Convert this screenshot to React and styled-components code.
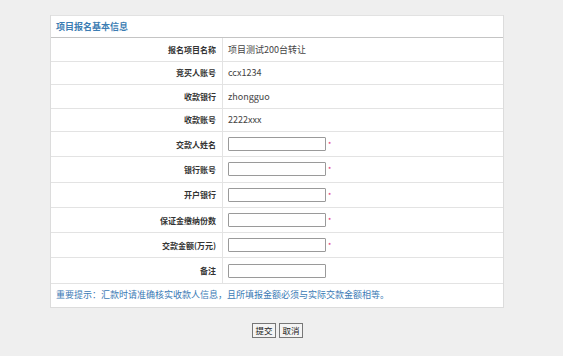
import React from "react";
import styled, { createGlobalStyle } from "styled-components";

const GlobalStyle = createGlobalStyle`
  html, body {
    margin: 0;
    padding: 0;
    background: #efefef;
    font-family: "Noto Sans CJK SC", "Noto Sans", sans-serif;
  }
`;

const Page = styled.div`
  width: 563px;
  height: 356px;
  padding-top: 15px;
  box-sizing: border-box;
  background: #efefef;
`;

const Panel = styled.div`
  margin-left: 50px;
  width: 454px;
  background: #fff;
  border: 1px solid #dcdcdc;
  border-top: 0;
  box-sizing: border-box;
`;

const Title = styled.div`
  height: 23px;
  box-sizing: border-box;
  line-height: 22px;
  padding-left: 5px;
  font-size: 9px;
  font-weight: bold;
  color: #3c7db3;
  border-top: 1px solid #e2e2e2;
  border-bottom: 1px solid #c4c4c4;
`;

const Row = styled.div`
  display: grid;
  grid-template-columns: 172px 1fr;
  height: ${(p) => p.$h}px;
  box-sizing: border-box;
  border-bottom: 1px solid #e3e3e3;
`;

const Label = styled.div`
  display: flex;
  align-items: center;
  justify-content: flex-end;
  padding-right: 6px;
  border-right: 1px solid #e3e3e3;
  font-size: 8px;
  font-weight: bold;
  color: #333;
`;

const Value = styled.div`
  display: flex;
  align-items: center;
  padding-left: 5px;
  font-size: 9px;
  color: #444;
`;

const Input = styled.input`
  width: 98px;
  height: 14px;
  box-sizing: border-box;
  border: 1px solid #9a9a9a;
  border-radius: 1px;
  margin: 0;
  padding: 0 2px;
  font-size: 8px;
  background: #fff;
`;

const Star = styled.span`
  color: #e0206a;
  font-size: 7px;
  margin-left: 2px;
`;

const Tip = styled.div`
  height: 23px;
  box-sizing: border-box;
  line-height: 22px;
  padding-left: 5px;
  font-size: 9px;
  color: #3a7ab5;
`;

const Actions = styled.div`
  display: flex;
  justify-content: center;
  gap: 3px;
  margin-top: 15px;
  padding-right: 8px;
`;

const Button = styled.button`
  width: 24px;
  height: 15px;
  padding: 0;
  margin: 0;
  font-family: "Noto Sans CJK SC", sans-serif;
  font-size: 8.5px;
  line-height: 12px;
  color: #222;
  background: #f4f4f4;
  border: 1px solid #777;
  border-radius: 0;
`;

const info = [
  ["报名项目名称", "项目测试200台转让"],
  ["竞买人账号", "ccx1234"],
  ["收款银行", "zhongguo"],
  ["收款账号", "2222xxx"],
];

const fields = [
  ["交款人姓名", true],
  ["银行账号", true],
  ["开户银行", true],
  ["保证金缴纳份数", true],
  ["交款金额(万元)", true],
  ["备注", false],
];

export default function App() {
  return (
    <Page>
      <GlobalStyle />
      <Panel>
        <Title>项目报名基本信息</Title>
        {info.map(([label, value]) => (
          <Row key={label} $h={23.5}>
            <Label>{label}</Label>
            <Value>{value}</Value>
          </Row>
        ))}
        {fields.map(([label, required]) => (
          <Row key={label} $h={25.3}>
            <Label>{label}</Label>
            <Value>
              <Input type="text" />
              {required && <Star>*</Star>}
            </Value>
          </Row>
        ))}
        <Tip>重要提示：汇款时请准确核实收款人信息，且所填报金额必须与实际交款金额相等。</Tip>
      </Panel>
      <Actions>
        <Button>提交</Button>
        <Button>取消</Button>
      </Actions>
    </Page>
  );
}
